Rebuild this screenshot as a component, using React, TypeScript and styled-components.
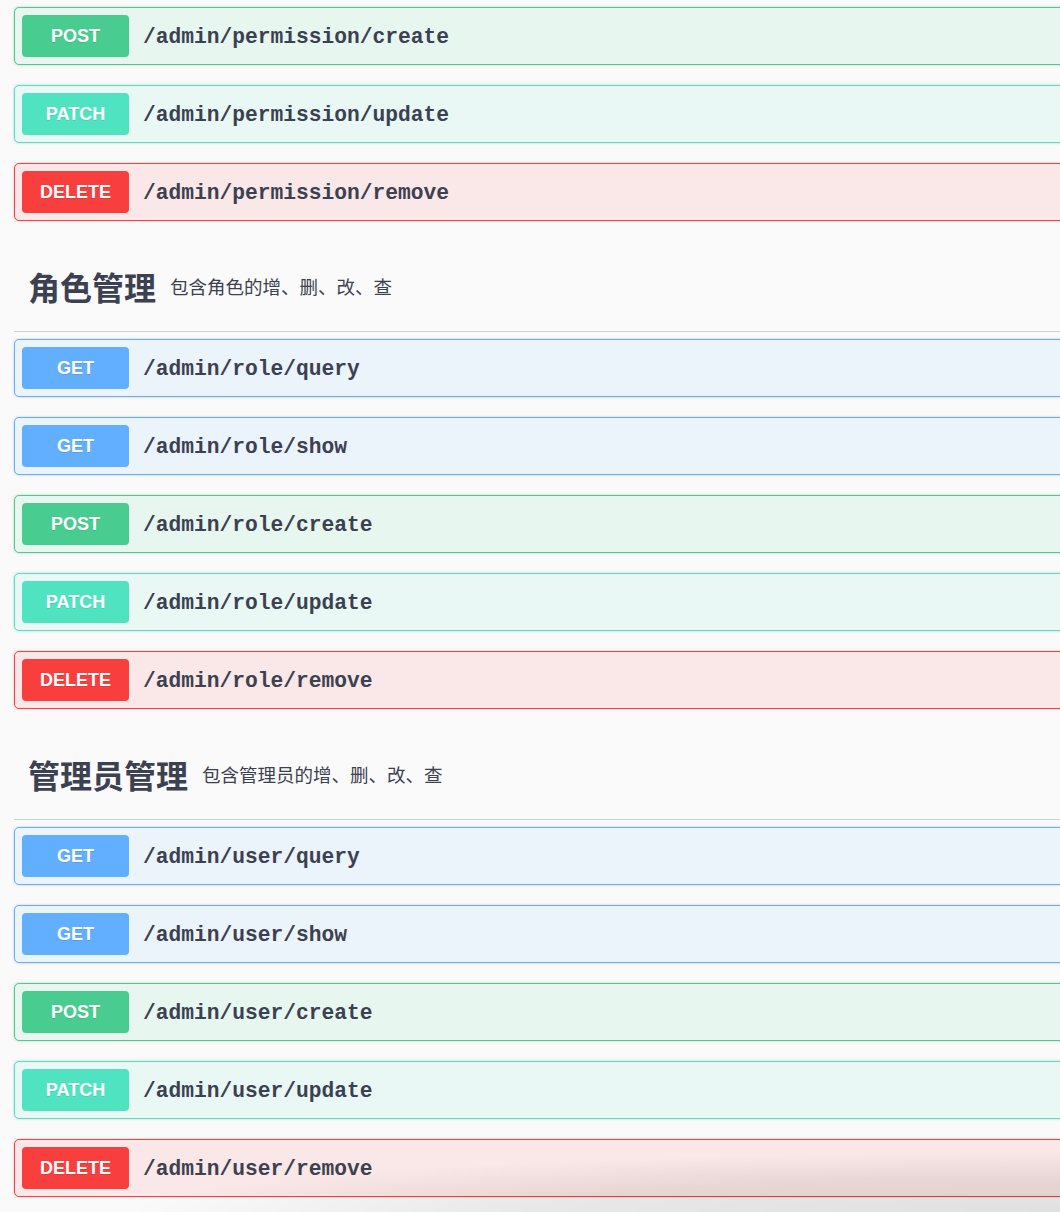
import React from 'react';
import styled, { createGlobalStyle } from 'styled-components';

type Method = 'GET' | 'POST' | 'PATCH' | 'DELETE';

interface Operation {
  method: Method;
  path: string;
}

interface Tag {
  name: string;
  description: string;
  operations: Operation[];
}

const methodColors: Record<Method, { main: string; bg: string }> = {
  GET: { main: '#61affe', bg: '#ebf3fb' },
  POST: { main: '#49cc90', bg: '#e8f6f0' },
  PATCH: { main: '#50e3c2', bg: '#e9f8f5' },
  DELETE: { main: '#f93e3e', bg: '#fae7e7' },
};

const GlobalStyle = createGlobalStyle`
  html, body {
    margin: 0;
    padding: 0;
    background: #fafafa;
    overflow: hidden;
  }
  body {
    font-family: "Liberation Sans", "Noto Sans CJK SC", sans-serif;
    color: #3b4151;
  }
`;

const Page = styled.div`
  width: 100vw;
  height: 1212px;
  overflow: hidden;
  background: #fafafa;
`;

const Content = styled.div`
  width: 1100px;
  padding: 7px 0 0 14px;
`;

const TagHeader = styled.div`
  display: flex;
  align-items: center;
  height: 90px;
  padding-left: 14px;
  margin-bottom: 7px;
  border-bottom: 1px solid #cdcfd3;
`;

const TagTitle = styled.h4`
  margin: 0;
  font-family: "Noto Sans CJK SC", sans-serif;
  font-size: 32px;
  font-weight: 700;
  color: #3b4151;
  line-height: 1;
`;

const TagDescription = styled.small`
  margin-left: 14px;
  font-family: "Noto Sans CJK SC", sans-serif;
  font-size: 18.5px;
  font-weight: 400;
  color: #3b4151;
  line-height: 1;
`;

const OpBlock = styled.div<{ $method: Method }>`
  display: flex;
  align-items: center;
  box-sizing: border-box;
  height: 58px;
  padding: 0 7px;
  margin-bottom: 20px;
  border: 1px solid ${({ $method }) => methodColors[$method].main};
  border-radius: 5px;
  background: ${({ $method }) => methodColors[$method].bg};
  box-shadow: 0 0 3px rgba(0, 0, 0, 0.19);
`;

const MethodBadge = styled.span<{ $method: Method }>`
  display: flex;
  align-items: center;
  justify-content: center;
  width: 107px;
  height: 42px;
  border-radius: 4px;
  background: ${({ $method }) => methodColors[$method].main};
  color: #fff;
  font-family: "Liberation Sans", Arial, sans-serif;
  font-size: 18px;
  font-weight: 700;
  text-shadow: 0 1px 0 rgba(0, 0, 0, 0.1);
`;

const OpPath = styled.span`
  margin-left: 14px;
  padding-top: 2px;
  font-family: "Liberation Mono", "Courier New", monospace;
  font-size: 21.25px;
  font-weight: 700;
  color: #3b4151;
`;

const BottomShade = styled.div`
  position: fixed;
  left: 0;
  right: 0;
  bottom: 0;
  height: 75px;
  pointer-events: none;
  background: radial-gradient(
    110% 100% at 100% 100%,
    rgba(0, 0, 0, 0.1) 0%,
    rgba(0, 0, 0, 0.07) 45%,
    rgba(0, 0, 0, 0) 80%
  );
`;

const firstOps: Operation[] = [
  { method: 'POST', path: '/admin/permission/create' },
  { method: 'PATCH', path: '/admin/permission/update' },
  { method: 'DELETE', path: '/admin/permission/remove' },
];

const crud = (base: string): Operation[] => [
  { method: 'GET', path: `/admin/${base}/query` },
  { method: 'GET', path: `/admin/${base}/show` },
  { method: 'POST', path: `/admin/${base}/create` },
  { method: 'PATCH', path: `/admin/${base}/update` },
  { method: 'DELETE', path: `/admin/${base}/remove` },
];

const tags: Tag[] = [
  { name: '角色管理', description: '包含角色的增、删、改、查', operations: crud('role') },
  { name: '管理员管理', description: '包含管理员的增、删、改、查', operations: crud('user') },
];

const OperationRow: React.FC<{ op: Operation }> = ({ op }) => (
  <OpBlock $method={op.method}>
    <MethodBadge $method={op.method}>{op.method}</MethodBadge>
    <OpPath>{op.path}</OpPath>
  </OpBlock>
);

const App: React.FC = () => {
  return (
    <Page>
      <GlobalStyle />
      <Content>
        {firstOps.map((op) => (
          <OperationRow key={op.path} op={op} />
        ))}
        {tags.map((tag) => (
          <section key={tag.name}>
            <TagHeader>
              <TagTitle>{tag.name}</TagTitle>
              <TagDescription>{tag.description}</TagDescription>
            </TagHeader>
            {tag.operations.map((op) => (
              <OperationRow key={op.path} op={op} />
            ))}
          </section>
        ))}
      </Content>
      <BottomShade />
    </Page>
  );
};

export default App;
